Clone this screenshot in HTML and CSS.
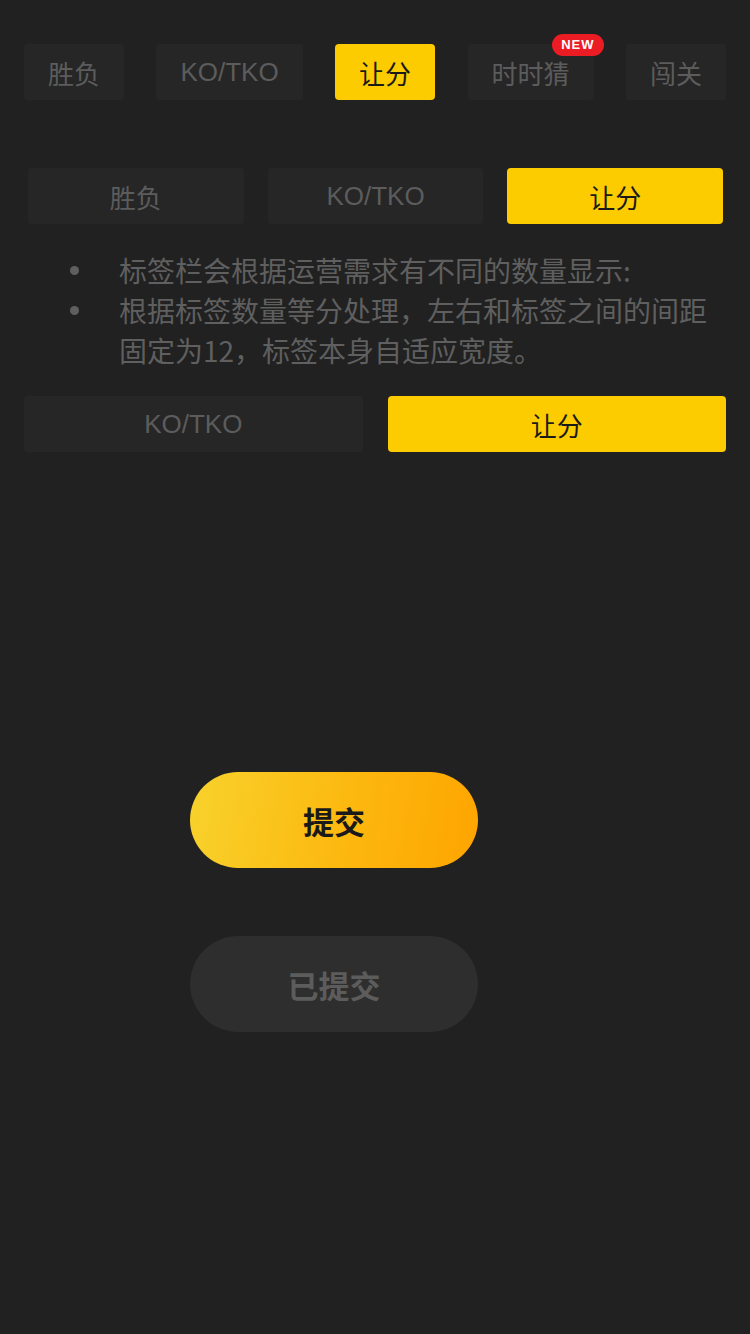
FILE: index.html
```html
<!DOCTYPE html>
<html lang="zh-CN">
<head>
<meta charset="utf-8">
<link rel="stylesheet" href="styles.css">
</head>
<body>
<div class="page">
  <div class="tabs tabs-five">
    <div class="tab">胜负</div>
    <div class="tab latin">KO/TKO</div>
    <div class="tab active">让分</div>
    <div class="tab has-badge">时时猜<span class="badge">NEW</span></div>
    <div class="tab">闯关</div>
  </div>

  <div class="tabs tabs-equal tabs-three">
    <div class="tab">胜负</div>
    <div class="tab latin">KO/TKO</div>
    <div class="tab active">让分</div>
  </div>

  <ul class="notes">
    <li>标签栏会根据运营需求有不同的数量显示:</li>
    <li>根据标签数量等分处理，左右和标签之间的间距固定为12，标签本身自适应宽度。</li>
  </ul>

  <div class="tabs tabs-equal tabs-two">
    <div class="tab latin">KO/TKO</div>
    <div class="tab active">让分</div>
  </div>

  <div class="buttons">
    <button class="btn btn-primary">提交</button>
    <button class="btn btn-done">已提交</button>
  </div>
</div>
</body>
</html>
```

FILE: styles.css
```css
* { box-sizing: border-box; }
html, body {
  margin: 0;
  padding: 0;
  background: #212121;
}
body {
  width: 750px;
  height: 1334px;
  font-family: "Noto Sans CJK SC", "Noto Sans", sans-serif;
  color: #5f5f5f;
}
.page {
  padding-top: 44px;
}
.tabs {
  display: flex;
  padding: 0 24px;
}
.tab {
  position: relative;
  height: 56px;
  display: flex;
  align-items: center;
  justify-content: center;
  background: #262626;
  border-radius: 4px;
  font-size: 26px;
  color: #5c5c5c;
  white-space: nowrap;
}
.tab.latin {
  font-family: "Liberation Sans", "Noto Sans CJK SC", sans-serif;
}
.tab.active {
  background: #fccb00;
  color: #1a1a1a;
}
.tabs-five {
  justify-content: space-between;
}
.tabs-five .tab {
  padding: 0 24px;
}
.badge {
  position: absolute;
  top: -10px;
  right: -10px;
  height: 22px;
  padding: 0 9px;
  border-radius: 11px;
  background: #ec1c24;
  color: #fff;
  font-family: "Liberation Sans", sans-serif;
  font-size: 13px;
  font-weight: 700;
  line-height: 22px;
  letter-spacing: 1px;
}
.tabs-equal .tab {
  flex: 1;
}
.tabs-three {
  margin-top: 68px;
  padding: 0 27px 0 28px;
  gap: 24px;
}
.tabs-two {
  margin-top: 26px;
  gap: 25px;
}
.notes {
  margin: 26px 0 0 0;
  padding: 0 20px 0 119px;
  list-style: none;
  font-size: 28px;
  line-height: 40px;
  color: #5f5f5f;
}
.notes li {
  position: relative;
}
.notes li::before {
  content: "";
  position: absolute;
  left: -49px;
  top: 16px;
  width: 9px;
  height: 9px;
  border-radius: 50%;
  background: #5f5f5f;
}
.buttons {
  margin-top: 320px;
  padding-left: 190px;
  display: flex;
  flex-direction: column;
  gap: 68px;
}
.btn {
  width: 288px;
  height: 96px;
  border: none;
  border-radius: 48px;
  font-family: "Noto Sans CJK SC", sans-serif;
  font-size: 31px;
  font-weight: 700;
  padding: 0;
}
.btn-primary {
  background: linear-gradient(100deg, #f8d22c 0%, #fcb80f 55%, #fea400 100%);
  color: #1a1a1a;
}
.btn-done {
  background: #2e2e2e;
  color: #5c5c5c;
}
```
